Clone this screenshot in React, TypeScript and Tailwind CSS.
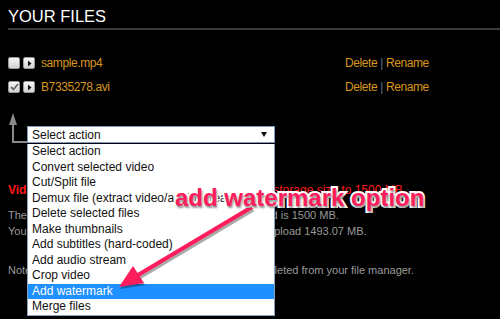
import React from 'react';

const actions = [
  'Select action',
  'Convert selected video',
  'Cut/Split file',
  'Demux file (extract video/audio stream)',
  'Delete selected files',
  'Make thumbnails',
  'Add subtitles (hard-coded)',
  'Add audio stream',
  'Crop video',
  'Add watermark',
  'Merge files',
];

const files = [
  { name: 'sample.mp4', checked: false },
  { name: 'B7335278.avi', checked: true },
];

function Box({ children }: { children?: React.ReactNode }) {
  return (
    <span className="w-[12px] h-[12px] rounded-[2px] border border-[#9a9a9a] bg-gradient-to-b from-[#f6f6f6] to-[#d4d4d4] flex items-center justify-center">
      {children}
    </span>
  );
}

function FileRow({ name, checked }: { name: string; checked: boolean }) {
  return (
    <div className="h-[24px] flex items-center">
      <Box>
        {checked && (
          <svg width="9" height="8" viewBox="0 0 9 8">
            <path d="M1 4 L3.5 6.5 L8 1" stroke="#6a6a6a" strokeWidth="1.8" fill="none" />
          </svg>
        )}
      </Box>
      <span className="ml-[3px]">
        <Box>
          <svg width="5" height="7" viewBox="0 0 5 7">
            <polygon points="1,0.5 4.5,3.5 1,6.5" fill="#111" />
          </svg>
        </Box>
      </span>
      <span className="ml-[6px] w-[304px] text-[12px] tracking-[-0.4px] text-[#d9961c]">{name}</span>
      <span className="text-[12px] tracking-[-0.4px] text-[#d9961c]">
        Delete <span className="text-[#5a7390]">|</span> Rename
      </span>
    </div>
  );
}

export default function App() {
  return (
    <div className="w-[500px] h-[319px] bg-black relative overflow-hidden pl-2 font-['Liberation_Sans',Arial,sans-serif]">
      <h1 className="pt-[6px] text-[16.5px] leading-[20px] text-white">YOUR FILES</h1>
      <div className="mt-[2px] h-[2px] bg-[#3a3a3a]" />

      <div className="mt-[21px]">
        {files.map((f) => (
          <FileRow key={f.name} name={f.name} checked={f.checked} />
        ))}
      </div>

      <div className="mt-[14px] flex">
        <svg width="19" height="31" viewBox="0 0 19 31" className="shrink-0">
          <polygon points="1,12 5,0 9,12" fill="#8a8a8a" />
          <path d="M5 10 V29 H19" stroke="#8a8a8a" strokeWidth="2" fill="none" />
        </svg>
        <div className="relative mt-[13px] w-[248px]">
          <div className="h-[17px] border border-[#7c9cc6] bg-white flex items-center justify-between pl-[4px] pr-[7px] text-[12px] text-[#111]">
            <span>Select action</span>
            <svg width="6" height="5" viewBox="0 0 6 5">
              <polygon points="0,0 6,0 3,5" fill="#111" />
            </svg>
          </div>
          <ul className="absolute top-full left-0 z-10 w-[248px] bg-white border border-t-0 border-[#8da3c0] text-[12px] text-[#111]">
            {actions.map((a) => (
              <li
                key={a}
                className={`h-[15.5px] leading-[15.5px] pl-[4px] whitespace-nowrap ${
                  a === 'Add watermark' ? 'bg-[#1e90ff] text-white' : ''
                }`}
              >
                {a}
              </li>
            ))}
          </ul>
        </div>
      </div>

      <p className="mt-[38px] text-[12px] leading-[16px] text-[#ff1a1a] whitespace-nowrap">
        <b>Video</b> files: upgrade your account to increase the storage size to 1500 MB
      </p>
      <div className="mt-[9px] text-[11px] leading-[16px] text-[#9a9a9a] whitespace-nowrap">
        <p>The maximum size of a single video file you can upload is 1500 MB.</p>
        <p>You have used 6.93 MB of your storage. You can still upload 1493.07 MB.</p>
      </div>
      <p className="mt-[23px] text-[11px] leading-[16px] text-[#9a9a9a] whitespace-nowrap">
        Note: all files older than 7 days will be automatically deleted from your file manager.
      </p>

      <svg width="500" height="319" viewBox="0 0 500 319" className="absolute left-0 top-0 z-20 pointer-events-none">
        <line x1="252" y1="207" x2="138" y2="275" stroke="#00000055" strokeWidth="5" transform="translate(1 2)" />
        <polygon points="119,287 133,266 144,283" fill="#00000055" transform="translate(1 2)" />
        <line x1="252" y1="207" x2="138" y2="275" stroke="#fe1c5c" strokeWidth="4" />
        <polygon points="119,287 133,266 144,283" fill="#fe1c5c" />
      </svg>

      <div className="absolute left-[175px] top-[186px] z-30 text-[24px] leading-none font-bold text-[#fe1c5c] whitespace-nowrap [-webkit-text-stroke:4px_white] [paint-order:stroke_fill] [text-shadow:1px_2px_2px_rgba(0,0,0,0.45)]">
        add watermark option
      </div>
    </div>
  );
}
